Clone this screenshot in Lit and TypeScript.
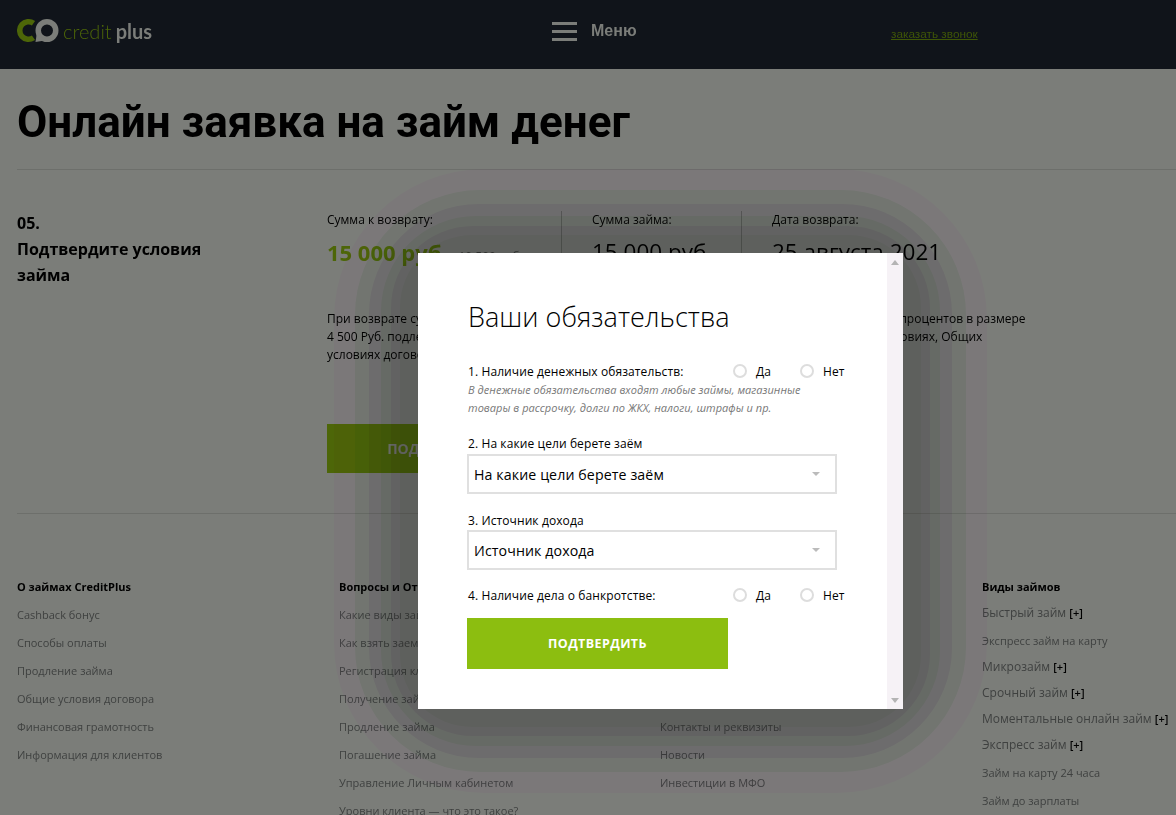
import { LitElement, html, css } from 'lit';
import { customElement } from 'lit/decorators.js';

const FOOTER_COLUMNS = [
  {
    title: 'О займах CreditPlus',
    links: ['Cashback бонус', 'Способы оплаты', 'Продление займа', 'Общие условия договора', 'Финансовая грамотность', 'Информация для клиентов'],
  },
  {
    title: 'Вопросы и Ответы',
    links: ['Какие виды займов', 'Как взять заем', 'Регистрация клиента', 'Получение займа', 'Продление займа', 'Погашение займа', 'Управление Личным кабинетом', 'Уровни клиента — что это такое?'],
  },
  {
    title: 'О компании',
    links: ['О нас', 'Документы', 'Вакансии', 'Отзывы', 'Контакты и реквизиты', 'Новости', 'Инвестиции в МФО'],
  },
];

const LOAN_TYPES = [
  { label: 'Быстрый займ', more: true },
  { label: 'Экспресс займ на карту', more: false },
  { label: 'Микрозайм', more: true },
  { label: 'Срочный займ', more: true },
  { label: 'Моментальные онлайн займ', more: true },
  { label: 'Экспресс займ', more: true },
  { label: 'Займ на карту 24 часа', more: false },
  { label: 'Займ до зарплаты', more: false },
];

// banded dialog shadow, outermost first: distance from the dialog edge, corner radius, multiply tint
const SHADOW_BANDS = [
  { offset: 84, radius: 150, tint: 'rgb(255, 245, 255)' },
  { offset: 63, radius: 125, tint: 'rgb(236, 249, 236)' },
  { offset: 49, radius: 110, tint: 'rgb(244, 235, 248)' },
  { offset: 37, radius: 95, tint: 'rgb(239, 250, 236)' },
  { offset: 27, radius: 82, tint: 'rgb(245, 236, 247)' },
  { offset: 18, radius: 72, tint: 'rgb(245, 250, 242)' },
];

@customElement('app-root')
export class AppRoot extends LitElement {
  static styles = css`
    :host {
      display: block;
      position: relative;
      height: 815px;
      overflow: hidden;
      background: #7b7d79;
      color: #000;
      font-family: "Open Sans", sans-serif;
      font-size: 11.5px;
    }

    .topbar {
      display: grid;
      grid-template-columns: 535px 339px 1fr;
      height: 69px;
      padding-left: 17px;
      box-sizing: border-box;
      background: #10141a;
    }
    .logo {
      display: flex;
      align-items: center;
      height: 62px;
      font-family: Lato, sans-serif;
      font-size: 20px;
      line-height: 24px;
    }
    .logo svg { display: block; margin-right: 4px; }
    .logo .credit { color: #4d6608; font-weight: 300; }
    .logo .plus { color: #7b7d79; font-weight: 700; margin-left: 4px; }
    .menu {
      display: flex;
      align-items: center;
      gap: 14px;
      height: 62px;
      color: #7b7d79;
      font: bold 16px "Liberation Sans", sans-serif;
    }
    .burger { display: flex; flex-direction: column; gap: 5px; width: 25px; }
    .burger i { display: block; height: 3px; background: #7b7d79; }
    .callback {
      margin-top: 27px;
      color: #3f5607;
      font: 11.8px/14px "Liberation Sans", sans-serif;
      text-decoration: underline;
    }

    .title {
      height: 101px;
      margin: 0 0 0 17px;
      border-bottom: 1px solid #6d6f6b;
      box-sizing: border-box;
      font: 700 44px/106px Roboto, sans-serif;
    }

    .order {
      display: flex;
      height: 344px;
      margin-left: 17px;
      border-bottom: 1px solid #6d6f6b;
      box-sizing: border-box;
    }
    .step {
      width: 310px;
      padding-top: 40px;
      font-size: 16px;
      font-weight: 700;
      line-height: 26px;
    }
    .summary { display: flex; flex-direction: column; padding-top: 41px; }
    .stats { display: flex; height: 60px; }
    .stat { width: 234px; }
    .stat + .stat { box-sizing: border-box; width: 180px; padding-left: 30px; border-left: 1px solid #5f615d; }
    .stat .name { line-height: 18px; font-size: 12px; }
    .stat .value { margin-top: 7px; font-size: 22.5px; line-height: 32px; white-space: nowrap; }
    .stat .value.accent { color: #4d6608; font-weight: 700; font-size: 22px; }
    .stat .old { margin-left: 17px; font-size: 12px; font-weight: 400; color: #3a3c3a; }
    .terms { width: 700px; margin: 39px 0 0; line-height: 18px; font-size: 12px; white-space: nowrap; }
    .cta {
      width: 226px;
      height: 49px;
      margin-top: 60px;
      background: #4d6608;
      color: #7b7d79;
      font-size: 14px;
      font-weight: 700;
      line-height: 49px;
      text-align: center;
    }

    .footer {
      display: grid;
      grid-template-columns: 322px 321px 322px 1fr;
      padding: 63px 0 0 17px;
    }
    .footer h4 { margin: 0; font-size: 11px; font-weight: 700; line-height: 20px; }
    .footer ul { margin: 4px 0 0; padding: 0; list-style: none; }
    .footer li { height: 28px; color: #3f4140; font-size: 11px; line-height: 28px; white-space: nowrap; }
    .footer li.more { height: 26px; font-size: 12px; line-height: 24px; }
    .footer li.more b { color: #000; font-size: 11px; font-weight: 600; }

    .overlay {
      position: absolute;
      inset: 0;
      display: flex;
      align-items: flex-start;
      padding: 253px 0 0 418px;
    }
    .dialog { position: relative; width: 485px; height: 456px; flex: none; }
    .band { position: absolute; mix-blend-mode: multiply; }
    .sheet {
      position: relative;
      display: flex;
      height: 100%;
      background: #fff;
    }
    .content { flex: 1; padding: 46px 0 0 50px; font-size: 12px; letter-spacing: 0.1px; }
    .content h2 { margin: 0 0 27px; font-size: 27px; font-weight: 300; line-height: 36px; letter-spacing: 0.03px; }
    .scrollbar {
      display: flex;
      flex-direction: column;
      justify-content: space-between;
      align-items: center;
      width: 16px;
      padding: 7px 0 6px;
      box-sizing: border-box;
      background: #f6f2f6;
    }
    .arrow { width: 0; height: 0; border: 4.5px solid transparent; }
    .arrow.up { border-top: 0; border-bottom: 5px solid #b4b4b4; }
    .arrow.down { border-bottom: 0; border-top: 5px solid #b4b4b4; }

    .question { display: flex; align-items: center; height: 18px; white-space: nowrap; }
    .question .text { width: 265px; }
    .radio { display: flex; align-items: center; width: 67px; gap: 9px; }
    .radio i { box-sizing: border-box; width: 14px; height: 14px; border: 2px solid #ddd; border-radius: 50%; }
    .hint { margin: 1px 0 0; color: #777; font-size: 11px; font-style: italic; line-height: 18px; letter-spacing: 0.04px; }

    .field-label { margin-top: 18px; line-height: 18px; }
    .select {
      display: flex;
      justify-content: space-between;
      align-items: center;
      box-sizing: border-box;
      width: 370px;
      height: 40px;
      margin: 1px 0 0 -1px;
      padding: 0 15px 0 5px;
      border: 2px solid #e0e0e0;
      font-size: 14.2px;
    }
    .select .caret { width: 0; height: 0; border: 4px solid transparent; border-bottom: 0; border-top: 4px solid #bbb; }
    .select + .question { margin-top: 16px; }
    .field-label.second + .select { margin-top: 0; }
    .submit {
      width: 261px;
      height: 51px;
      margin: 14px 0 0 -1px;
      background: #8cbe10;
      color: #fff;
      font-size: 12.5px;
      font-weight: 700;
      letter-spacing: 0.4px;
      line-height: 51px;
      text-align: center;
    }
  `;

  private renderRadios() {
    return html`
      <span class="radio"><i></i>Да</span>
      <span class="radio"><i></i>Нет</span>
    `;
  }

  private renderLogo() {
    return html`
      <svg width="42" height="24" viewBox="0 0 42 24" fill="none">
        <path d="M16.5 4.33A8.75 8.75 0 1 0 16.5 18.67" stroke="#4d6608" stroke-width="5.5" />
        <circle cx="30" cy="11.5" r="8.75" stroke="#7b7d79" stroke-width="5.5" />
        <path d="M20 13L18.5 23L28 21.5z" fill="#7b7d79" />
      </svg>
    `;
  }

  render() {
    return html`
      <header class="topbar">
        <div class="logo">
          ${this.renderLogo()}
          <span class="credit">credit</span><span class="plus">plus</span>
        </div>
        <div class="menu">
          <div class="burger"><i></i><i></i><i></i></div>
          Меню
        </div>
        <a class="callback">заказать звонок</a>
      </header>

      <h1 class="title">Онлайн заявка на займ денег</h1>

      <section class="order">
        <div class="step">05.<br />Подтвердите условия<br />займа</div>
        <div class="summary">
          <div class="stats">
            <div class="stat">
              <div class="name">Сумма к возврату:</div>
              <div class="value accent">15 000 руб<span class="old">10 500 руб</span></div>
            </div>
            <div class="stat">
              <div class="name">Сумма займа:</div>
              <div class="value">15 000 руб</div>
            </div>
            <div class="stat">
              <div class="name">Дата возврата:</div>
              <div class="value">25 августа 2021</div>
            </div>
          </div>
          <p class="terms">
            При возврате суммы займа в установленный договором срок вам будет начислена общая сумма процентов в размере<br />
            4 500 Руб. подлежит уплате клиентом на договорных условиях, указанных в Индивидуальных условиях, Общих<br />
            условиях договора
          </p>
          <div class="cta">ПОДТВЕРДИТЬ</div>
        </div>
      </section>

      <footer class="footer">
        ${FOOTER_COLUMNS.map(
          (col) => html`
            <div>
              <h4>${col.title}</h4>
              <ul>${col.links.map((link) => html`<li>${link}</li>`)}</ul>
            </div>
          `
        )}
        <div>
          <h4>Виды займов</h4>
          <ul>
            ${LOAN_TYPES.map(
              (item) => item.more
                ? html`<li class="more">${item.label} <b>[+]</b></li>`
                : html`<li>${item.label}</li>`
            )}
          </ul>
        </div>
      </footer>

      <div class="overlay">
        <div class="dialog">
          ${SHADOW_BANDS.map(
            (band) => html`<div
              class="band"
              style="inset: ${-band.offset}px; border-radius: ${band.radius}px; background: ${band.tint}"
            ></div>`
          )}
          <div class="sheet">
            <div class="content">
              <h2>Ваши обязательства</h2>
              <div class="question"><span class="text">1. Наличие денежных обязательств:</span>${this.renderRadios()}</div>
              <p class="hint">В денежные обязательства входят любые займы, магазинные<br />товары в рассрочку, долги по ЖКХ, налоги, штрафы и пр.</p>
              <div class="field-label">2. На какие цели берете заём</div>
              <div class="select">На какие цели берете заём<span class="caret"></span></div>
              <div class="field-label second">3. Источник дохода</div>
              <div class="select">Источник дохода<span class="caret"></span></div>
              <div class="question"><span class="text">4. Наличие дела о банкротстве:</span>${this.renderRadios()}</div>
              <div class="submit">ПОДТВЕРДИТЬ</div>
            </div>
            <div class="scrollbar"><span class="arrow up"></span><span class="arrow down"></span></div>
          </div>
        </div>
      </div>
    `;
  }
}
